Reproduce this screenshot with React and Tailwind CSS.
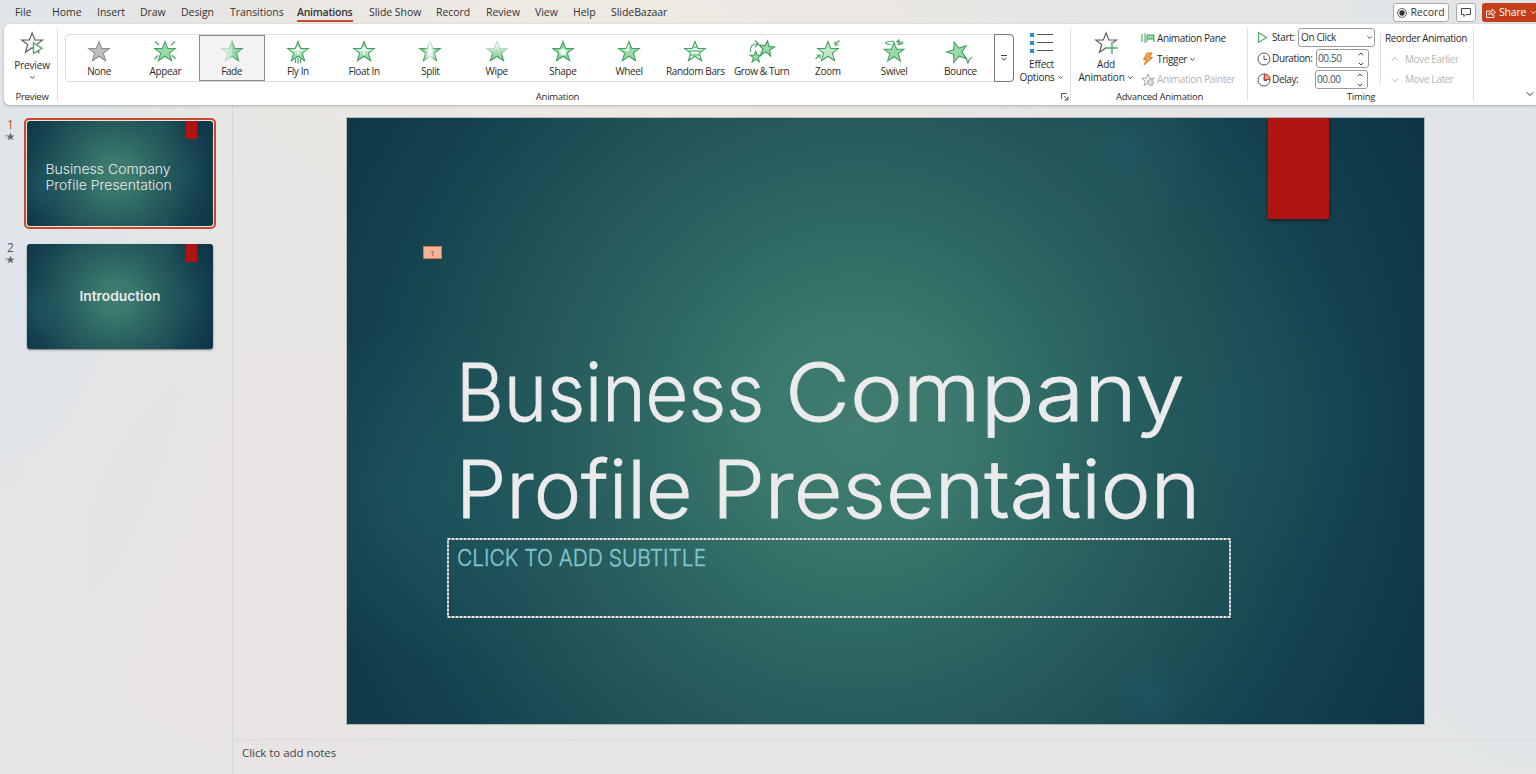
import React, { useState } from 'react';
import { ChevronDown, ChevronUp } from 'lucide-react';

const STAR = 'M12 1.5L14.9 9H22.8L16.6 13.8L19 21.8L12 17.1L5 21.8L7.4 13.8L1.2 9H9.1Z';

const tabs = [
  { name: 'File', width: 'w-[37px]' },
  { name: 'Home', width: 'w-[45px]' },
  { name: 'Insert', width: 'w-[43px]' },
  { name: 'Draw', width: 'w-[41px]' },
  { name: 'Design', width: 'w-[49px]' },
  { name: 'Transitions', width: 'w-[67px]' },
  { name: 'Animations', width: 'w-[72px]' },
  { name: 'Slide Show', width: 'w-[67px]' },
  { name: 'Record', width: 'w-[50px]' },
  { name: 'Review', width: 'w-[49px]' },
  { name: 'View', width: 'w-[38px]' },
  { name: 'Help', width: 'w-[38px]' },
  { name: 'SlideBazaar', width: 'w-[60px]' },
];

const effects = [
  'None', 'Appear', 'Fade', 'Fly In', 'Float In', 'Split', 'Wipe',
  'Shape', 'Wheel', 'Random Bars', 'Grow & Turn', 'Zoom', 'Swivel', 'Bounce',
];

const fills = {
  None: '#c3bfbc',
  Fade: 'url(#fade)',
  'Fly In': 'url(#rise)',
  'Float In': 'url(#rise)',
  Split: 'url(#split)',
  Wipe: 'url(#wipe)',
  Shape: 'url(#shape)',
  'Random Bars': 'url(#bars)',
  Zoom: '#bfe8c8',
};

const strokes = {
  None: '#8b8886',
  Fade: 'url(#fadeLine)',
  Split: 'url(#splitLine)',
  Wipe: 'url(#wipeLine)',
};

// Shared gradients for the effect stars
const GradientDefs = () => (
  <svg className="absolute size-0" aria-hidden="true">
    <defs>
      <linearGradient id="fade">
        <stop offset="0.1" stopColor="#e6f5e9" />
        <stop offset="0.48" stopColor="#c4e6cb" />
        <stop offset="0.52" stopColor="#9bd9a9" />
        <stop offset="1" stopColor="#8ed29d" />
      </linearGradient>
      <linearGradient id="fadeLine">
        <stop offset="0.3" stopColor="#bcdcc3" />
        <stop offset="0.7" stopColor="#3f9f5c" />
      </linearGradient>
      <linearGradient id="rise" x1="0" y1="0" x2="0" y2="1">
        <stop offset="0" stopColor="#7ecb91" />
        <stop offset="0.4" stopColor="#c9ebd0" />
        <stop offset="1" stopColor="#86cf97" />
      </linearGradient>
      <linearGradient id="split">
        <stop offset="0.2" stopColor="#8bd29c" />
        <stop offset="0.5" stopColor="#ffffff" />
        <stop offset="0.8" stopColor="#8bd29c" />
      </linearGradient>
      <linearGradient id="splitLine">
        <stop offset="0.2" stopColor="#3f9f5c" />
        <stop offset="0.5" stopColor="#dcefe0" />
        <stop offset="0.8" stopColor="#3f9f5c" />
      </linearGradient>
      <linearGradient id="wipe" x1="0" y1="0" x2="0" y2="1">
        <stop offset="0.2" stopColor="#f0f9f2" />
        <stop offset="0.5" stopColor="#b5e0bf" />
        <stop offset="1" stopColor="#80cc92" />
      </linearGradient>
      <linearGradient id="wipeLine" x1="0" y1="0" x2="0" y2="1">
        <stop offset="0.35" stopColor="#b9dbc1" />
        <stop offset="0.75" stopColor="#3f9f5c" />
      </linearGradient>
      <radialGradient id="shape" cy="0.55">
        <stop offset="0.2" stopColor="#f3fbf4" />
        <stop offset="0.5" stopColor="#8ed39f" />
      </radialGradient>
      <linearGradient id="bars" x1="0" y1="0" x2="0" y2="0.22" spreadMethod="repeat">
        <stop offset="0.5" stopColor="#8bd29c" />
        <stop offset="0.5" stopColor="#e9f7ec" />
      </linearGradient>
    </defs>
  </svg>
);

const EffectIcon = ({ name }) => {
  const line = { fill: 'none', stroke: '#49a566', strokeWidth: 1.2 };

  if (name === 'Grow & Turn') {
    return (
      <svg viewBox="0 0 26 24" className="h-6 w-[26px] overflow-visible" fill="#9bd9a9" stroke="#3f9f5c" strokeWidth="1.6">
        <path d={STAR} transform="translate(9 .5) rotate(8 8 8) scale(.72)" />
        <path d={STAR} transform="translate(.5 11.5) scale(.52)" strokeWidth="2" />
        <path d="M1.5 13C.5 8 3.5 4.5 8.5 4.5M6 1.5L9.3 4.5L6 8" {...line} />
      </svg>
    );
  }

  return (
    <svg viewBox="0 0 24 24" className="size-6 overflow-visible">
      <path
        d={STAR}
        transform={name === 'Bounce' ? 'translate(-2 1) rotate(-18 12 12) scale(.95)' : name === 'Swivel' ? 'translate(1 2) scale(.92)' : 'translate(.6 1) scale(.95)'}
        fill={fills[name] || '#9bd9a9'}
        stroke={strokes[name] || '#3f9f5c'}
        strokeWidth="1.1"
      />
      {name === 'Appear' && <path d="M2 2.5L6 6M22 2.5L18 6M1.5 20L5 16.5M22.5 20L19 16.5" {...line} />}
      {name === 'Fly In' && <path d="M9.5 20V24M12 19V24.5M14.5 20V24" {...line} />}
      {(name === 'Fly In' || name === 'Float In') && <path d="M12 16V9M8.5 12L12 8.5L15.5 12" {...line} stroke="#fff" />}
      {name === 'Wheel' && <path d="M12 4L9.5 10L5 10.5L12 13Z" fill="#e0f4e4" />}
      {name === 'Zoom' && <path d="M23.5 1.5L18.5 6M19 2.5V6H22.5M-.5 20L3.5 16.5M.5 16H4V19.5" {...line} />}
      {name === 'Swivel' && <path d="M9 5.5C1 5 2 2 12 2.3M15.5 5.5C23 5 22 2.7 15.5 2.7M17.5 .5L15 2.7L18 5" {...line} />}
      {name === 'Bounce' && <path d="M16 18L18.5 20L20 24.5M20 24.5C20.5 20.5 22 19 24.5 18.5" {...line} />}
    </svg>
  );
};

const OutlineStar = ({ children, className = 'size-7' }) => (
  <svg viewBox="0 0 28 28" className={`${className} overflow-visible`} fill="none">
    <path d={STAR} transform="translate(2.6 1.4) scale(.96)" fill="#f7f7f7" stroke="#5b5b5b" strokeWidth="1.2" />
    {children}
  </svg>
);

const Caret = ({ className = 'size-2' }) => <ChevronDown className={className} strokeWidth={3} />;

const Group = ({ label, width, children }) => (
  <section className={`${width} relative flex h-full shrink-0 flex-col`}>
    <div className="flex h-[66px]">{children}</div>
    <div className="text-center text-[9.5px] leading-[14px] tracking-[-0.25px]">{label}</div>
    <div className="absolute top-1 right-0 h-[73px] w-px bg-[#dedede]" />
  </section>
);

const Clock = ({ red }) => (
  <svg viewBox="0 0 14 14" className="size-3.5 shrink-0" fill="none" stroke="#555" strokeWidth="1">
    <circle cx="7" cy="7" r="6" />
    {red && <path d="M7.5 1A6 6 0 0 1 13 6.5H7.5Z" fill="#f1a199" stroke="#d43d2f" />}
    <path d="M7 3.5V7.5H10" />
  </svg>
);

const Spinner = ({ label, value, red, offset }) => (
  <div className="flex h-[21px] items-center">
    <Clock red={red} />
    <span className={`ml-px ${offset} shrink-0`}>{label}</span>
    <div className="flex h-[19px] w-[53px] shrink-0 items-center justify-between rounded-[3px] border border-[#999] pr-[3px] pl-px text-[#31566b]">
      <span>{value}</span>
      <span className="flex flex-col gap-[2px] text-[#444]">
        <ChevronUp className="size-2" strokeWidth={3} />
        <ChevronDown className="size-2" strokeWidth={3} />
      </span>
    </div>
  </div>
);

const Gallery = ({ selected, onSelect }) => (
  <div className="mt-[10px] flex h-12 w-[949px] rounded-[4px] border border-[#dcdcdc]">
    {effects.map((name) => (
      <button
        key={name}
        onClick={() => onSelect(name)}
        className={`flex h-[46px] w-[66.25px] shrink-0 flex-col items-center pt-1 whitespace-nowrap ${
          selected === name ? 'bg-[#f3f3f3] outline outline-[#8c8c8c] -outline-offset-1' : ''
        }`}
      >
        <EffectIcon name={name} />
        <span className="text-[10px] leading-[17px]">{name}</span>
      </button>
    ))}
    <button className="-my-px -mr-px flex h-12 flex-1 items-center justify-center rounded-r-[4px] border border-[#777]">
      <svg viewBox="0 0 8 8" className="size-2" fill="none" stroke="#444">
        <path d="M1 1.5H7M1.5 4L4 6L6.5 4" />
      </svg>
    </button>
  </div>
);

const Ribbon = () => {
  const [effect, setEffect] = useState('Fade');

  return (
    <div className="relative z-10 ml-1 flex h-[81px] rounded-l-[6px] bg-white text-[10px] tracking-[-0.37px] text-[#2b2b2b] shadow-[0_1px_3px_rgba(0,0,0,0.25)]">
      <Group label={<span className="relative left-px">Preview</span>} width="w-[54px]">
        <div className="flex w-full flex-col items-center pt-[6px] pl-[2px] tracking-[-0.15px]">
          <OutlineStar>
            <path d="M15.5 13V23.5L24 18.2Z" fill="#fff" stroke="#4aab69" strokeWidth="1.3" />
          </OutlineStar>
          <span className="leading-[14px]">Preview</span>
          <Caret className="mt-[2px] size-[7px]" />
        </div>
      </Group>

      <Group label={<span className="relative -left-[7px]">Animation</span>} width="w-[1013px]">
        <div className="pl-[7px]">
          <Gallery selected={effect} onSelect={setEffect} />
        </div>
        <div className="flex w-[55px] flex-col items-center pt-[9px] text-center leading-[13px] tracking-[-0.25px]">
          <svg viewBox="0 0 24 22" className="h-[22px] w-6">
            <path d="M0 0H4V4H0ZM0 8H4V12H0ZM0 16H4V20H0Z" fill="#2a8bcb" />
            <path d="M7 1.5H23M7 9.5H23M7 17.5H23" stroke="#555" />
          </svg>
          <span className="mt-[3px]">Effect</span>
          <span className="flex items-center gap-[2px]">Options <Caret className="size-[7px]" /></span>
        </div>
        <svg viewBox="0 0 8 8" className="absolute right-[2px] bottom-[4px] size-2" fill="none" stroke="#555">
          <path d="M.5 6V.5H6M3 3L7 7M7 3.5V7H3.5" />
        </svg>
      </Group>

      <Group label="Advanced Animation" width="w-[177px]">
        <div className="flex w-[70px] flex-col items-center pt-[6px] leading-[13px] tracking-[-0.2px]">
          <OutlineStar>
            <path d="M14 13H26V25H14Z" fill="#fff" />
            <path d="M20 12V24M14 18H26" stroke="#4aab69" strokeWidth="1.4" />
          </OutlineStar>
          <span>Add</span>
          <span className="flex items-center gap-[2px]">Animation <Caret className="size-[7px]" /></span>
        </div>
        <div className="flex flex-col pt-[4px] whitespace-nowrap">
          <div className="flex h-[21px] items-center gap-[2px]">
            <svg viewBox="0 0 14 10" className="h-[10px] w-[14px]">
              <path d="M1 1V9M4 0V10" stroke="#3f9f5c" />
              <path d="M6 2H13V6H6Z" fill="#9bd9a9" stroke="#3f9f5c" />
              <path d="M6 9V6M13 9V6" stroke="#3f9f5c" />
            </svg>
            <span>Animation Pane</span>
          </div>
          <div className="flex h-[21px] items-center gap-[2px]">
            <svg viewBox="0 0 14 14" className="size-[14px]">
              <path d="M6 1H11L8.5 5.5H11.5L3 13L5.5 7.5H2.5Z" fill="#f8a04c" stroke="#e57a25" />
            </svg>
            <span className="flex items-center gap-[2px]">Trigger <Caret className="size-[7px]" /></span>
          </div>
          <div className="flex h-[21px] items-center gap-[2px] text-[#b5b5b5]">
            <svg viewBox="0 0 24 24" className="size-[14px]" fill="none" stroke="#a5a5a5" strokeWidth="1.7">
              <path d={STAR} />
              <path d="M11 13L17 11L22 15L18 22L12 19Z" fill="#ddd" />
            </svg>
            <span>Animation Painter</span>
          </div>
        </div>
      </Group>

      <Group label="Timing" width="w-[226px]">
        <div className="flex w-[132px] flex-col pt-[3px] pl-[9px]">
          <div className="flex h-[21px] items-center">
            <svg viewBox="0 0 12 14" className="h-[13px] w-[11px]" fill="#fff" stroke="#4aab69" strokeWidth="1.2">
              <path d="M1.5 1.5V12.5L10.5 7Z" />
            </svg>
            <span className="ml-[4px] w-[26px]">Start:</span>
            <div className="flex h-[19px] w-[77px] shrink-0 items-center justify-between rounded-[3px] border border-[#999] pr-[1px] pl-[2px]">
              On Click
              <Caret className="size-[7px]" />
            </div>
          </div>
          <Spinner label="Duration:" value="00.50" offset="w-[44px]" />
          <Spinner label="Delay:" value="00.00" offset="w-[43px]" red />
        </div>
        <div className="mt-[9px] h-[50px] w-px bg-[#dedede]" />
        <div className="flex flex-col pt-[4px] pl-[4px] whitespace-nowrap">
          <div className="flex h-[21px] items-center">Reorder Animation</div>
          <div className="flex h-[21px] items-center gap-[4px] pl-[4px] text-[#b5b5b5]">
            <ChevronUp className="size-[12px]" />Move Earlier
          </div>
          <div className="flex h-[21px] items-center gap-[4px] pl-[4px] text-[#b5b5b5]">
            <ChevronDown className="size-[12px]" />Move Later
          </div>
        </div>
      </Group>
      <ChevronDown className="absolute right-0 bottom-[5px] size-[12px]" />
    </div>
  );
};

const slideBg =
  'bg-[radial-gradient(circle_at_71.8%_5.5%,rgba(36,96,116,0.4)_0,rgba(36,92,96,0.3)_3%,rgba(36,92,100,0.22)_6%,transparent_9%),radial-gradient(circle_at_74.5%_95%,rgba(30,88,110,0.45)_0,transparent_4%),radial-gradient(circle_at_82%_50%,rgba(30,86,96,0.4)_0,transparent_18%),radial-gradient(circle_at_7%_62%,rgba(32,92,104,0.5)_0,transparent_16%),radial-gradient(circle_at_47.5%_51%,#417d70_0,#3a776c_17%,#2e6864_32%,#265a5b_48%,#1d4f55_61%,#164350_74%,#113b4a_86%,#0d3547_98%)]';

const Thumbnail = ({ number, active, children }) => (
  <div className="flex h-[123px]">
    <div className={`w-[14px] pl-[7px] text-[12px] leading-[13px] ${active ? 'text-[#c8492b]' : 'text-[#555]'}`}>
      {number}
      <svg viewBox="0 0 24 24" className="mt-px -ml-px size-[9px] overflow-visible" fill="#666">
        <path d={STAR} />
        <path d="M-3 9H3M-2 14H4" stroke="#888" strokeWidth="1.5" />
      </svg>
    </div>
    <div className={`ml-[10px] h-[111px] w-[192px] rounded-[5px] border-2 p-px ${active ? 'border-[#c8492b] bg-[#ece5df]' : 'border-transparent'}`}>
      <div className={`relative h-full rounded-[3px] text-[#ebebeb] ${active ? '' : 'shadow-[0_1px_2px_rgba(0,0,0,0.5)]'} ${slideBg}`}>
        <div className="absolute top-0 right-[16px] h-[18px] w-[11px] bg-[#b01513]" />
        {children}
      </div>
    </div>
  </div>
);

const Slide = () => (
  <main className={`relative mt-[13px] ml-[114px] h-[606px] w-[1077px] shadow-[0_0_0_1px_rgba(110,130,135,0.45)] ${slideBg}`}>
    <div className="absolute top-0 right-[95px] h-[101px] w-[61px] bg-[#b01513] shadow-[0_2px_3px_rgba(0,0,0,0.5)]" />
    <div className="absolute top-[128px] left-[76px] flex h-[13px] w-[19px] items-center justify-center border border-[#e0724f] bg-[#f4b497] text-[8px] text-[#555]">
      1
    </div>
    <h1 className="h-[421px] pt-[225px] pl-[109px] font-['Inter'] text-[80px] leading-[97px] font-light whitespace-nowrap text-[#ebebeb] [-webkit-text-stroke:0.8px_#ebebeb]">
      <span className="inline-block origin-left scale-x-[0.92]">Business</span>{' '}
      <span className="-ml-[29px] inline-block origin-left scale-x-[1.115]">Company</span>
      <br />
      <span className="inline-block">Profile</span>{' '}
      <span className="-ml-[3px] inline-block origin-left scale-x-[1.052]">Presentation</span>
    </h1>
    <div className="relative mt-[-1px] ml-[100px] h-[80px] w-[784px] pt-[7px] pl-[10px] font-['Inter'] text-[23px] leading-[26px] font-light text-[#7fc5cc]">
      <svg className="absolute inset-0 size-full">
        <rect x="1" y="1" width="782" height="78" fill="none" stroke="#92999b" strokeWidth="2" />
        <rect x="1" y="1" width="782" height="78" fill="none" stroke="#fff" strokeWidth="1.4" strokeDasharray="2 2" />
      </svg>
      <span className="inline-block origin-left scale-x-[0.91] [-webkit-text-stroke:0.4px_#7fc5cc]">CLICK TO ADD SUBTITLE</span>
    </div>
  </main>
);

const App = () => (
  <div className="flex h-[774px] w-[1536px] flex-col overflow-hidden bg-[#e6e5e4] bg-[radial-gradient(ellipse_500px_250px_at_600px_40px,#efeae3_0,transparent_100%),radial-gradient(ellipse_250px_550px_at_0_200px,#e0e5e9_20%,transparent_100%),radial-gradient(ellipse_360px_900px_at_1536px_250px,#e1e5e8_40%,transparent_100%),radial-gradient(ellipse_350px_350px_at_290px_560px,#e8e4e3_20%,transparent_100%)] font-['Open_Sans','Noto_Sans',sans-serif] text-[#333]">
    <GradientDefs />
    <header className="flex h-6 shrink-0 items-center pt-px pl-[15px] text-[10.5px] tracking-[-0.05px]">
      {tabs.map((tab) => (
        <button key={tab.name} className={`${tab.width} shrink-0 pt-px text-left whitespace-nowrap`}>
          {tab.name === 'Animations' ? (
            <span className="relative font-semibold tracking-[-0.25px]">
              Animations
              <span className="absolute -bottom-[3px] left-0 h-[2px] w-14 bg-[#c8492b]" />
            </span>
          ) : (
            tab.name
          )}
        </button>
      ))}
      <div className="ml-auto flex items-center gap-[7px]">
        <button className="flex h-[19px] w-[56px] items-center justify-center gap-[3px] rounded-[3px] border border-[#aaa] bg-white">
          <svg viewBox="0 0 10 10" className="size-2.5">
            <circle cx="5" cy="5" r="4.4" fill="none" stroke="#333" strokeWidth=".8" />
            <circle cx="5" cy="5" r="2.7" fill="#333" />
          </svg>
          Record
        </button>
        <button className="flex h-[19px] w-5 items-center justify-center rounded-[3px] border border-[#aaa] bg-white">
          <svg viewBox="0 0 10 9" className="h-[9px] w-2.5" fill="none" stroke="#444">
            <path d="M.5.5H9.5V6.5H5L3 8.5V6.5H.5Z" />
          </svg>
        </button>
        <button className="-ml-px flex h-[19px] w-[54px] items-center gap-[3px] rounded-l-[3px] bg-[#c43e1c] pl-[4px] tracking-[-0.2px] text-white">
          <svg viewBox="0 0 10 10" className="size-2.5 shrink-0" fill="none" stroke="#fff" strokeWidth=".9">
            <path d="M4 3H.5V9.5H8V7M3 7C3 4.5 4 3.5 6 3.5V1.2L9.5 4.3L6 7.3V5.2C4.5 5.2 3.5 6 3 7Z" />
          </svg>
          Share
          <Caret className="ml-px size-[7px] shrink-0" />
        </button>
      </div>
    </header>

    <Ribbon />

    <div className="flex flex-1">
      <aside className="w-[233px] border-r border-[#d8d8d8] pt-[13px]">
        <Thumbnail number={1} active>
          <div className="origin-left scale-x-[1.085] pt-[41px] pl-[17px] font-['Inter'] text-[12.9px] leading-4 font-light whitespace-nowrap">
            Business Company
            <br />
            Profile Presentation
          </div>
        </Thumbnail>
        <Thumbnail number={2}>
          <div className="scale-x-[1.06] pt-[44px] text-center font-['Inter'] text-[13px] leading-4 font-semibold">Introduction</div>
        </Thumbnail>
      </aside>
      <div className="flex flex-1 flex-col">
        <div className="h-[635px] shrink-0 border-b border-[#d8d8d8]">
          <Slide />
        </div>
        <div className="flex-1 pt-[5px] pl-[9px] text-[11.5px] leading-4 tracking-[-0.05px] text-[#444]">Click to add notes</div>
      </div>
    </div>
  </div>
);

export default App;
